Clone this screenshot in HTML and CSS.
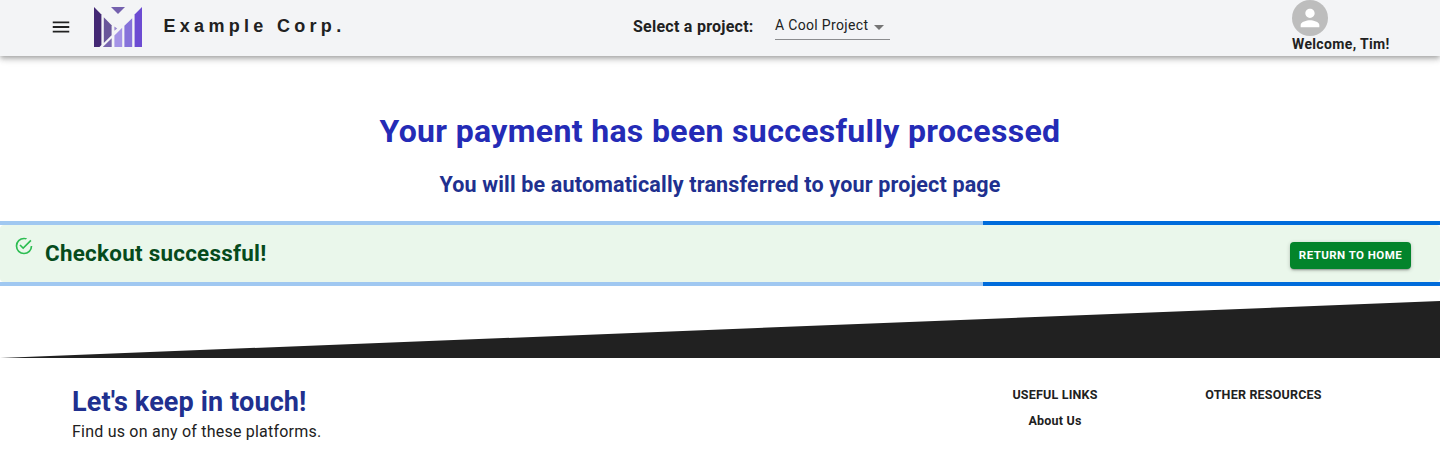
FILE: index.html
```html
<!DOCTYPE html>
<html lang="en">
<head>
<meta charset="utf-8">
<title>Example Corp.</title>
<link rel="stylesheet" href="styles.css">
</head>
<body>
<header class="topbar">
  <div class="brand">
    <svg class="menu-icon" viewBox="0 0 24 24"><path d="M3 18h18v-2H3v2zm0-5h18v-2H3v2zm0-7v2h18V6H3z"/></svg>
    <svg class="logo" viewBox="0 0 48 40">
      <path fill="#432874" d="M0 0l7.4 7.4V38L5.5 40H0z"/>
      <path fill="#69569a" d="M9.8 10.2l7.8 8v10L9.8 36z"/>
      <path fill="#7764ae" d="M8.8 40l8.9-8.8V40z"/>
      <path fill="#7460ae" d="M17 0h14l-7 7z"/>
      <path fill="#9b8ad0" d="M20.4 19.5l2.8 2-2.8 2.3z"/>
      <path fill="#a493e6" d="M20.4 28.6l7.8-7.8V40h-7.8z"/>
      <path fill="#8672da" d="M30.4 18.8l7.8-7.6V40h-7.8z"/>
      <path fill="#6c4bd2" d="M40.6 7.6L48 0v40h-7.4z"/>
    </svg>
    <span class="brand-name">Example Corp.</span>
  </div>
  <div class="picker">
    <span class="picker-label">Select a project:</span>
    <div class="select"><span>A Cool Project</span><svg class="caret" viewBox="0 0 10 5"><path d="M0 0l5 5 5-5z"/></svg></div>
  </div>
  <div class="user">
    <div class="avatar"><svg viewBox="0 0 24 24"><path d="M12 12c2.21 0 4-1.79 4-4s-1.79-4-4-4-4 1.79-4 4 1.79 4 4 4zm0 2c-2.67 0-8 1.34-8 4v2h16v-2c0-2.66-5.33-4-8-4z"/></svg></div>
    <span class="welcome">Welcome, Tim!</span>
  </div>
</header>
<main>
  <h1 class="title">Your payment has been succesfully processed</h1>
  <h2 class="subtitle">You will be automatically transferred to your project page</h2>
  <div class="progress"><div class="progress-bar"></div></div>
  <div class="alert">
    <svg class="check" viewBox="0 0 24 24"><path d="M20,12A8,8 0 0,1 12,20A8,8 0 0,1 4,12A8,8 0 0,1 12,4C12.76,4 13.5,4.11 14.2,4.31L15.77,2.74C14.61,2.26 13.34,2 12,2A10,10 0 0,0 2,12A10,10 0 0,0 12,22A10,10 0 0,0 22,12M7.91,10.08L6.5,11.5L11,16L21,6L19.59,4.58L11,13.17L7.91,10.08Z"/></svg>
    <strong class="alert-text">Checkout successful!</strong>
    <button class="home-button" type="button">RETURN TO HOME</button>
  </div>
  <div class="progress"><div class="progress-bar"></div></div>
</main>
<svg class="slope" viewBox="0 0 1440 57" preserveAspectRatio="none"><path d="M0 57L1440 0v57z"/></svg>
<footer class="footer">
  <div class="touch">
    <h3 class="touch-title">Let's keep in touch!</h3>
    <p class="touch-text">Find us on any of these platforms.</p>
  </div>
  <div class="links useful">
    <span class="links-title">USEFUL LINKS</span>
    <span class="link">About Us</span>
  </div>
  <div class="links">
    <span class="links-title">OTHER RESOURCES</span>
  </div>
</footer>
</body>
</html>
```
FILE: styles.css
```css
* { box-sizing: border-box; }
body {
  margin: 0;
  height: 452px;
  overflow: hidden;
  background: #fff;
  color: #212121;
  font-family: Roboto, "Liberation Sans", sans-serif;
}
h1, h2, h3, p { margin: 0; white-space: nowrap; }
svg { display: block; flex: none; }
.topbar {
  display: grid;
  grid-template-columns: 633px 659px 1fr;
  height: 56px;
  background: #f3f4f6;
  box-shadow: 0 2px 4px -1px rgba(0,0,0,.2), 0 4px 5px rgba(0,0,0,.14), 0 1px 10px rgba(0,0,0,.12);
  white-space: nowrap;
}
.brand { display: flex; align-items: flex-start; padding: 7px 0 0 50px; }
.menu-icon { width: 22px; height: 22px; margin: 9px 22px 0 0; fill: #212121; }
.logo { width: 48px; height: 40px; }
.brand-name {
  margin: 9px 0 0 21.5px;
  font: 700 18px/21px "Liberation Sans", Arial, sans-serif;
  letter-spacing: 4.3px;
}
.picker { display: flex; align-items: flex-start; }
.picker-label { width: 142px; margin-top: 15px; font-size: 16px; line-height: 24px; font-weight: 700; letter-spacing: .25px; }
.select {
  display: flex;
  align-items: center;
  width: 115px;
  height: 29px;
  margin-top: 11px;
  border-bottom: 1px solid #8b8c8e;
  font-size: 14px;
  letter-spacing: .33px;
}
.caret { width: 10px; height: 5px; margin: 4px 0 0 6px; fill: #757575; }
.avatar { display: grid; place-items: center; width: 36px; height: 36px; border-radius: 50%; background: #bdbdbd; }
.avatar svg { width: 28px; height: 28px; fill: #fff; }
.welcome { display: block; font-size: 14px; line-height: 16px; font-weight: 700; letter-spacing: .35px; }
.title { margin-top: 55px; text-align: center; color: #242bb6; font-size: 32px; line-height: 40px; letter-spacing: .34px; }
.subtitle { margin: 20px 0 22px; text-align: center; color: #20308f; font-size: 21.5px; line-height: 28px; letter-spacing: .17px; }
.progress { display: flex; justify-content: flex-end; height: 4px; background: #a0c8f1; }
.progress-bar { width: 457px; background: #006cdb; }
.alert { display: flex; align-items: flex-start; height: 57px; padding: 11px 29px 0 14px; border-radius: 4px; background: #eaf7eb; }
.check { width: 20px; height: 20px; fill: #2dbd52; }
.alert-text { margin: 3px auto 0 11px; color: #064b1c; font-size: 22.4px; line-height: 28px; letter-spacing: .27px; }
.home-button {
  width: 121px;
  height: 27px;
  margin-top: 6px;
  padding: 0;
  border: 0;
  border-radius: 4px;
  background: #03842b;
  color: #fff;
  font: 700 11.5px/27px Roboto, sans-serif;
  letter-spacing: .45px;
  box-shadow: 0 2px 2px -1px rgba(0,0,0,.3), 0 1px 4px rgba(0,0,0,.2);
}
.slope { width: 100%; height: 57px; margin-top: 15px; fill: #212121; }
.footer { display: grid; grid-template-columns: 866px 234px 183px; padding: 28px 72px 0; }
.touch-title { color: #20308f; font-size: 27px; line-height: 32px; letter-spacing: .13px; }
.touch-text { margin-top: 2px; font-size: 16px; line-height: 24px; letter-spacing: .22px; }
.links { display: flex; flex-direction: column; align-items: center; font-size: 12.5px; font-weight: 700; line-height: 18px; letter-spacing: .2px; gap: 8px; }
```
